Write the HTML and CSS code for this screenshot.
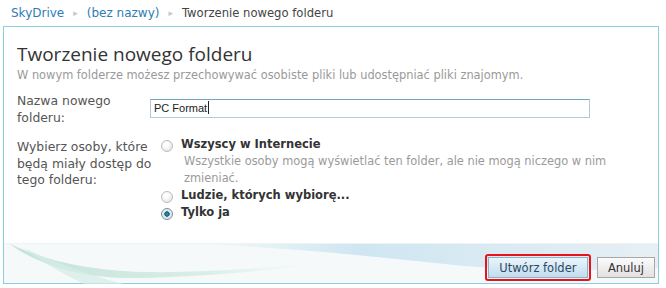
FILE: index.html
```html
<!DOCTYPE html>
<html lang="pl">
<head>
    <meta charset="UTF-8">
    <title>Tworzenie nowego folderu - SkyDrive</title>
    <link rel="stylesheet" href="styles.css">
</head>
<body>

    <div class="crumbs">
        <a href="#">SkyDrive</a>
        <span class="sep">&#9656;</span>
        <a href="#">(bez nazwy)</a>
        <span class="sep">&#9656;</span>
        <span class="current">Tworzenie nowego folderu</span>
    </div>

    <div class="panel">
        <div class="content">
            <h1>Tworzenie nowego folderu</h1>
            <p class="intro">W nowym folderze możesz przechowywać osobiste pliki lub udostępniać pliki znajomym.</p>

            <div class="row">
                <div class="label">Nazwa nowego folderu:</div>
                <div class="field">
                    <div class="input">PC Format<span class="caret"></span></div>
                </div>
            </div>

            <div class="row">
                <div class="label">Wybierz osoby, które będą miały dostęp do tego folderu:</div>
                <div class="field options">
                    <div class="option">
                        <span class="radio"></span>
                        <div>
                            <div class="opt-title">Wszyscy w Internecie</div>
                            <div class="opt-desc">Wszystkie osoby mogą wyświetlać ten folder, ale nie mogą niczego w nim zmieniać.</div>
                        </div>
                    </div>
                    <div class="option">
                        <span class="radio"></span>
                        <div class="opt-title">Ludzie, których wybiorę...</div>
                    </div>
                    <div class="option">
                        <span class="radio checked"></span>
                        <div class="opt-title">Tylko ja</div>
                    </div>
                </div>
            </div>
        </div>

        <div class="footer">
            <svg class="swoosh" width="654" height="40" viewBox="0 0 654 40" preserveAspectRatio="none">
                <defs>
                    <linearGradient id="blue" x1="0" y1="0" x2="1" y2="0">
                        <stop offset="0" stop-color="#d2e8f3" stop-opacity="0"/>
                        <stop offset="0.35" stop-color="#cfe6f2"/>
                        <stop offset="1" stop-color="#e6eff4"/>
                    </linearGradient>
                    <linearGradient id="green" x1="0" y1="0" x2="1" y2="0">
                        <stop offset="0" stop-color="#c4e3d8"/>
                        <stop offset="0.6" stop-color="#d9eee7"/>
                        <stop offset="1" stop-color="#eef6f3" stop-opacity="0"/>
                    </linearGradient>
                </defs>
                <path d="M190 0 C 300 4, 380 14, 460 22 C 540 28, 600 26, 654 24 L 654 0 Z" fill="url(#blue)"/>
                <path d="M6 0 C 40 16, 80 26, 140 28 C 200 29, 260 24, 330 18 C 260 28, 180 34, 120 34 C 70 33, 30 18, 6 0 Z" fill="url(#green)"/>
                <path d="M20 4 C 40 20, 60 30, 80 40 L 120 40 C 80 30, 50 18, 20 4 Z" fill="#d6ede5" opacity="0.7"/>
            </svg>
            <div class="buttons">
                <span class="highlight"><button class="btn primary">Utwórz folder</button></span>
                <button class="btn">Anuluj</button>
            </div>
        </div>
    </div>

</body>
</html>
```

FILE: styles.css
```css
/* General Styling */
body {
    margin: 0;
    background: #fff;
    font-family: 'DejaVu Sans', Verdana, sans-serif;
    font-size: 11px;
    color: #444;
    width: 666px;
    height: 288px;
    overflow: hidden;
}
a {
    color: #2f7cb5;
    text-decoration: none;
}

/* Breadcrumbs */
.crumbs {
    height: 26px;
    padding: 0 11px;
    display: flex;
    align-items: center;
    gap: 9px;
    font-size: 12px;
    box-sizing: border-box;
}
.crumbs .sep {
    color: #c8c8c8;
    font-size: 9px;
}
.crumbs .current {
    color: #444;
    font-size: 11.6px;
}

/* Panel */
.panel {
    margin-left: 3px;
    width: 656px;
    height: 258px;
    border: 1px solid #8ccfdc;
    box-sizing: border-box;
    display: flex;
    flex-direction: column;
    background: #fff;
}
.content {
    flex: 1;
    padding: 15px 13px 0 13px;
}
h1 {
    font-family: 'Open Sans', 'DejaVu Sans', sans-serif;
    font-weight: normal;
    font-size: 19px;
    color: #333;
    margin: 0;
    line-height: 24px;
}
.intro {
    color: #9a9a9a;
    font-size: 11.4px;
    margin: 1px 0 10px 0;
    line-height: 16px;
}

.row {
    display: flex;
    margin-bottom: 13px;
}
.label {
    width: 140px;
    margin-right: -7px;
    flex-shrink: 0;
    font-size: 12.4px;
    line-height: 16.5px;
    color: #555;
}
.field {
    flex: 1;
}
.input {
    width: 440px;
    height: 19px;
    box-sizing: border-box;
    border: 1px solid #b3cbd8;
    border-top-color: #6fa5c2;
    font-family: 'Liberation Sans', Arial, sans-serif;
    font-size: 11px;
    color: #222;
    padding: 1px 3px;
    line-height: 15px;
    margin-top: 6px;
}
.caret {
    display: inline-block;
    width: 1px;
    height: 13px;
    background: #222;
    vertical-align: -2px;
    margin-left: 1px;
}

/* Radio options */
.options {
    padding-left: 11px;
    margin-top: -3px;
}
.option {
    display: flex;
    align-items: flex-start;
    gap: 8px;
    line-height: 17px;
}
.radio {
    width: 12px;
    height: 12px;
    border-radius: 50%;
    border: 1px solid #bcbcbc;
    background: radial-gradient(circle at 40% 35%, #fff 20%, #e0e0e0 90%);
    box-sizing: border-box;
    margin-top: 4px;
    flex-shrink: 0;
}
.radio.checked {
    border-color: #7d8c94;
    background: radial-gradient(circle, #2aa0b8 0, #0b5d75 34%, #d9e5eb 42%, #f6f6f6 100%);
}
.opt-title {
    font-weight: bold;
    color: #333;
    font-size: 11.5px;
}
.opt-desc {
    color: #9a9a9a;
    font-size: 11.4px;
    padding-left: 3px;
    width: 430px;
}

/* Footer */
.footer {
    position: relative;
    height: 40px;
    display: flex;
    justify-content: flex-end;
    align-items: flex-start;
    padding: 10px 3px 0 0;
    box-sizing: border-box;
    background: #f6f9fa;
    border-top: 1px solid #eef3f4;
}
.swoosh {
    position: absolute;
    left: 0;
    top: 0;
}
.buttons {
    position: relative;
    display: flex;
    align-items: center;
    gap: 6px;
}
.highlight {
    border: 2px solid #e8121b;
    border-radius: 3px;
    padding: 1px;
    display: flex;
}
.btn {
    font-family: 'DejaVu Sans', Verdana, sans-serif;
    font-size: 11.5px;
    color: #333;
    height: 21px;
    padding: 0 10px;
    white-space: nowrap;
    border: 1px solid #a7a7a7;
    background: linear-gradient(#fbfbfb, #e2e2e2);
    cursor: pointer;
}
.btn.primary {
    width: 100px;
    padding: 0;
    color: #2b4a63;
    border-color: #8fb0c5;
    background: linear-gradient(#eaf5fb, #c3ddef);
}
```
